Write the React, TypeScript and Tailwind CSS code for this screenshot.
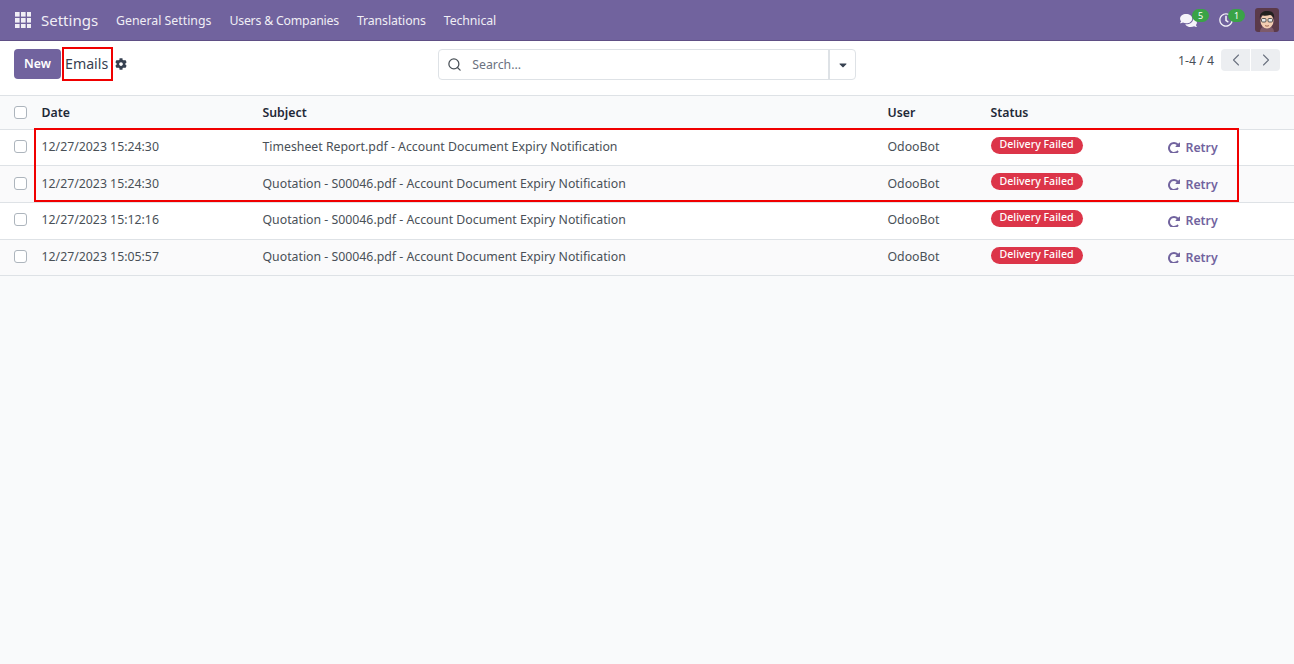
import { FaCog, FaComments, FaRegClock, FaCaretDown } from "react-icons/fa";
import { LuChevronLeft, LuChevronRight, LuSearch } from "react-icons/lu";

const rows = [
  { date: "12/27/2023 15:24:30", subject: "Timesheet Report.pdf - Account Document Expiry Notification" },
  { date: "12/27/2023 15:24:30", subject: "Quotation - S00046.pdf - Account Document Expiry Notification" },
  { date: "12/27/2023 15:12:16", subject: "Quotation - S00046.pdf - Account Document Expiry Notification" },
  { date: "12/27/2023 15:05:57", subject: "Quotation - S00046.pdf - Account Document Expiry Notification" },
];

function Checkbox() {
  return <span className="block h-[13px] w-[13px] rounded-[3px] border border-[#adb5bd] bg-white" />;
}

function AppsIcon() {
  const cells = [0, 6, 12];
  return (
    <svg width="16" height="16" viewBox="0 0 16 16" fill="#f0eef5">
      {cells.map((y) => cells.map((x) => <rect key={`${x}-${y}`} x={x} y={y} width="4.6" height="4.6" />))}
    </svg>
  );
}

function RetryIcon() {
  return (
    <svg viewBox="0 0 1536 1536" className="-ml-px -mt-[2px] mr-[6px] h-[12px] w-[12px]" fill="currentColor">
      <path d="M1536 256v448q0 26-19 45t-45 19h-448q-42 0-59-40-17-39 14-69l138-138q-148-137-349-137-104 0-198.5 40.5t-163.5 109.5-109.5 163.5-40.5 198.5 40.5 198.5 109.5 163.5 163.5 109.5 198.5 40.5q119 0 225-52t179-147q7-10 23-12 15 0 25 9l137 138q9 8 9.5 20.5t-7.5 22.5q-109 132-264 204.5t-327 72.5q-156 0-298-61t-245-164-164-245-61-298 61-298 164-245 245-164 298-61q147 0 284.5 55.5t244.5 156.5l130-129q29-31 70-14 39 17 39 59z" />
    </svg>
  );
}

function Avatar() {
  return (
    <svg width="24" height="24" viewBox="0 0 24 24" className="rounded-[3px]">
      <rect width="24" height="24" fill="#5b3a4a" />
      <path d="M5 24c0-4 3-6 7-6s7 2 7 6z" fill="#7d5a6a" />
      <ellipse cx="12" cy="13" rx="6.5" ry="7.5" fill="#f3cdb2" />
      <path d="M5 11c-1-6 3-8 7-8s8 1 7 8c-1-3-2-4-4-4-3 1-7 1-8 0-1 1-2 2-2 4z" fill="#23201f" />
      <rect x="6.5" y="10.5" width="4.5" height="3.5" rx="1" fill="#e8e8e8" stroke="#333" strokeWidth="0.8" />
      <rect x="13" y="10.5" width="4.5" height="3.5" rx="1" fill="#e8e8e8" stroke="#333" strokeWidth="0.8" />
      <path d="M10 17.5c1 .8 3 .8 4 0" stroke="#8a4b3a" strokeWidth="0.8" fill="none" />
    </svg>
  );
}

export default function App() {
  return (
    <div className="relative flex h-[664px] w-full flex-col bg-[#f9fafb] text-[12.3px] text-[#495057] [font-family:'Noto_Sans',sans-serif]">
      <nav className="flex h-[41px] items-center border-b border-[#5f4f85] bg-[#71639e] px-[15px] text-white">
        <AppsIcon />
        <span className="ml-[10px] text-[15px] text-[#f0eef5]">Settings</span>
        <div className="ml-[18px] mt-[3px] flex gap-[18px] text-[#f0eef5]">
          <span>General Settings</span>
          <span className="tracking-[-0.2px]">Users &amp; Companies</span>
          <span className="tracking-[-0.1px]">Translations</span>
          <span className="tracking-[-0.1px]">Technical</span>
        </div>
        <div className="ml-auto flex items-center">
          <span className="relative mr-[22px]">
            <FaComments className="h-[15px] w-[17px] text-[#f5f4f9]" />
            <span className="absolute left-[12px] top-[-4px] flex h-[13px] w-[17px] items-center justify-center rounded-full bg-[#3aa347] text-[9px] leading-none text-white">
              5
            </span>
          </span>
          <span className="relative mr-[22px]">
            <FaRegClock className="h-[14px] w-[14px] text-[#f5f4f9]" />
            <span className="absolute left-[9px] top-[-4px] flex h-[13px] w-[17px] items-center justify-center rounded-full bg-[#3aa347] text-[9px] leading-none text-white">
              1
            </span>
          </span>
          <Avatar />
        </div>
      </nav>

      <header className="flex h-[55px] items-start border-b border-[#dee2e6] bg-white px-[14px] pt-[8px]">
        <button className="h-[30px] w-[47px] rounded-[4px] bg-[#71639e] text-center font-semibold text-white">
          New
        </button>
        <span className="ml-[4px] text-[14.2px] leading-[30px] text-[#374151]">Emails</span>
        <FaCog className="ml-[7px] mt-[9px] h-[12px] w-[12px] text-[#374151]" />
        <div className="ml-[311px] flex h-[31px] w-[418px] items-center rounded-[4px] border border-[#dee2e6] bg-white">
          <LuSearch className="ml-[8px] h-[15px] w-[15px] text-[#495057]" />
          <span className="ml-[10px] mt-px flex-1 text-[#6b7280]">Search...</span>
          <span className="flex h-full w-[27px] items-center justify-center border-l-2 border-[#dee2e6]">
            <FaCaretDown className="h-[12px] w-[12px] text-[#374151]" />
          </span>
        </div>
        <div className="ml-auto flex items-center">
          <span className="mr-[7px] mt-[3px]">1-4 / 4</span>
          <span className="flex h-[22px] w-[29px] items-center justify-center rounded-l-[4px] bg-[#eceef1] text-[#6b7280]">
            <LuChevronLeft className="h-[20px] w-[20px]" strokeWidth={1.3} />
          </span>
          <span className="ml-px flex h-[22px] w-[29px] items-center justify-center rounded-r-[4px] bg-[#eceef1] text-[#6b7280]">
            <LuChevronRight className="h-[20px] w-[20px]" strokeWidth={1.3} />
          </span>
        </div>
      </header>

      <div className="grid h-[33.6px] grid-cols-[41.5px_221px_625px_103px_1fr] items-center border-b border-[#dee2e6] font-semibold text-[#1f2937]">
        <span className="pl-[14px]"><Checkbox /></span>
        <span className="mt-px">Date</span>
        <span className="mt-px">Subject</span>
        <span className="mt-px">User</span>
        <span className="mt-px">Status</span>
      </div>

      {rows.map((row, i) => (
        <div
          key={i}
          className={`grid h-[36.65px] grid-cols-[41.5px_221px_625px_103px_178px_1fr] items-center border-b border-[#dee2e6] ${
            i % 2 === 0 ? "bg-white" : "bg-[#fafafb]"
          }`}
        >
          <span className="-mt-[2px] pl-[14px]"><Checkbox /></span>
          <span>{row.date}</span>
          <span>{row.subject}</span>
          <span>OdooBot</span>
          <span className="-mt-[6px]">
            <span className="inline-flex h-[17px] w-[92px] items-center justify-center rounded-full bg-[#dc3549] text-[10.6px] font-medium text-white">
              Delivery Failed
            </span>
          </span>
          <span className="mt-[2px] flex items-center font-semibold text-[#71639e]">
            <RetryIcon />
            Retry
          </span>
        </div>
      ))}

      <div className="pointer-events-none absolute left-[62px] top-[47px] h-[34px] w-[51px] border-2 border-[#f00000]" />
      <div className="pointer-events-none absolute left-[34px] top-[128px] h-[74px] w-[1205px] border-2 border-[#f00000]" />
    </div>
  );
}
